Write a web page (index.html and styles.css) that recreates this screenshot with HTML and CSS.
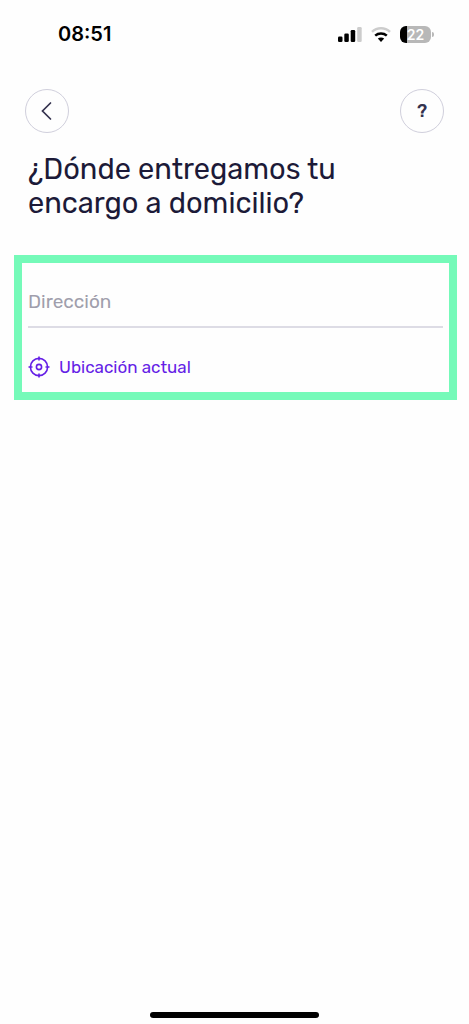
FILE: index.html
```html
<!DOCTYPE html>
<html lang="es">
<head>
<meta charset="utf-8">
<meta name="viewport" content="width=device-width, initial-scale=1">
<title>Dirección de entrega</title>
<link rel="stylesheet" href="styles.css">
</head>
<body>
<div class="screen">
  <div class="status">
    <time class="clock">08:51</time>
    <div class="indicators">
      <svg class="signal" viewBox="0 0 24 16" aria-hidden="true">
        <rect x="0" y="10.500" width="4.500" height="5.500" rx="1.300"/>
        <rect x="6.300" y="7.500" width="4.500" height="8.500" rx="1.300"/>
        <rect x="12.700" y="4" width="4.500" height="12" rx="1.300"/>
        <rect class="off" x="19.200" y="1" width="4.500" height="15" rx="1.300"/>
      </svg>
      <svg class="wifi" viewBox="0 0 20 16" aria-hidden="true">
        <path class="arc off" d="M1 5.800C6 1.200 14 1.200 19 5.800"/>
        <path class="arc" d="M4.200 9.600C7.500 6.700 12.500 6.700 15.800 9.600"/>
        <path d="M6.800 12.600C8.500 11 11.500 11 13.200 12.600L10 15.900Z"/>
      </svg>
      <div class="battery"><span class="level">22</span></div>
    </div>
  </div>
  <header class="nav">
    <button class="round" type="button" aria-label="Atrás">
      <svg class="chevron" viewBox="0 0 12 20" aria-hidden="true"><path d="M9.500 2 1.500 10l8 8"/></svg>
    </button>
    <button class="round" type="button" aria-label="Ayuda">?</button>
  </header>
  <main class="content">
    <h1 class="title">¿Dónde entregamos tu encargo a domicilio?</h1>
    <form class="panel">
      <input class="address" type="text" placeholder="Dirección" aria-label="Dirección">
      <button class="locate" type="button">
        <svg class="target" viewBox="0 0 22 22" aria-hidden="true">
          <circle cx="11" cy="11" r="8.600"/>
          <circle cx="11" cy="11" r="2.600"/>
          <path d="M11 .5v4M11 17.500v4M.5 11h4M17.500 11h4"/>
        </svg>
        Ubicación actual
      </button>
    </form>
  </main>
  <div class="home"></div>
</div>
</body>
</html>
```
FILE: styles.css
```css
* {
  box-sizing: border-box;
}

body {
  margin: 0;
  background: #fefefe;
  color: #1c1a38;
  font-family: Rubik, Roboto, sans-serif;
}

button {
  padding: 0;
  background: none;
  font-family: inherit;
  cursor: pointer;
}

.screen {
  display: flex;
  flex-direction: column;
  min-height: 100vh;
}

.status {
  display: flex;
  align-items: center;
  justify-content: space-between;
  height: 68px;
  padding: 0 38px 0 58px;
  color: #000;
}

.clock {
  font: 600 20px Inter, sans-serif;
}

.indicators {
  display: flex;
  align-items: center;
  gap: 9px;
}

.signal {
  width: 24px;
  height: 16px;
}

.wifi {
  width: 20px;
  height: 16px;
}

.off {
  fill: #ccc;
}

.arc {
  fill: none;
  stroke: #000;
  stroke-width: 2.5;
}

.arc.off {
  stroke: #ccc;
}

.battery {
  position: relative;
  width: 31px;
  height: 17px;
  border-radius: 6px;
  background: linear-gradient(to right, #000 7px, #b8b8b8 7px);
  color: #fff;
  font: 600 14px/17px Inter, sans-serif;
  text-align: center;
}

.battery::after {
  content: "";
  position: absolute;
  top: 6px;
  right: -3px;
  width: 2px;
  height: 5px;
  border-radius: 0 2px 2px 0;
  background: #b8b8b8;
}

.nav {
  display: flex;
  justify-content: space-between;
  padding: 21px 25px 0;
}

.round {
  display: flex;
  align-items: center;
  justify-content: center;
  width: 44px;
  height: 44px;
  border: 1px solid #d0cfdc;
  border-radius: 50%;
  color: #34324e;
  font-size: 18px;
  font-weight: 500;
}

.chevron {
  width: 12px;
  height: 20px;
  fill: none;
  stroke: #34324e;
  stroke-width: 1.7;
  stroke-linecap: round;
}

.content {
  flex: 1;
  padding: 19px 12px 0 14px;
}

.title {
  max-width: 360px;
  margin: 0 0 35px;
  padding-left: 14px;
  font-size: 29px;
  font-weight: 400;
  line-height: 34px;
}

.panel {
  padding: 14px 6px 13px;
  border: 8px solid #75fab9;
}

.address {
  display: block;
  width: 100%;
  height: 51px;
  padding: 0;
  border: 0;
  border-bottom: 2px solid #dddce5;
  background: none;
  color: inherit;
  font: inherit;
  font-size: 19px;
}

.address::placeholder {
  color: #a09eac;
  opacity: 1;
}

.locate {
  display: flex;
  align-items: center;
  gap: 9px;
  height: 24px;
  margin-top: 27px;
  border: 0;
  color: #651fe6;
  font-size: 17px;
}

.target {
  width: 22px;
  height: 22px;
  fill: none;
  stroke: currentColor;
  stroke-width: 1.6;
}

.home {
  width: 36%;
  height: 6px;
  margin: 0 auto 6px;
  border-radius: 3px;
  background: #000;
}
```
